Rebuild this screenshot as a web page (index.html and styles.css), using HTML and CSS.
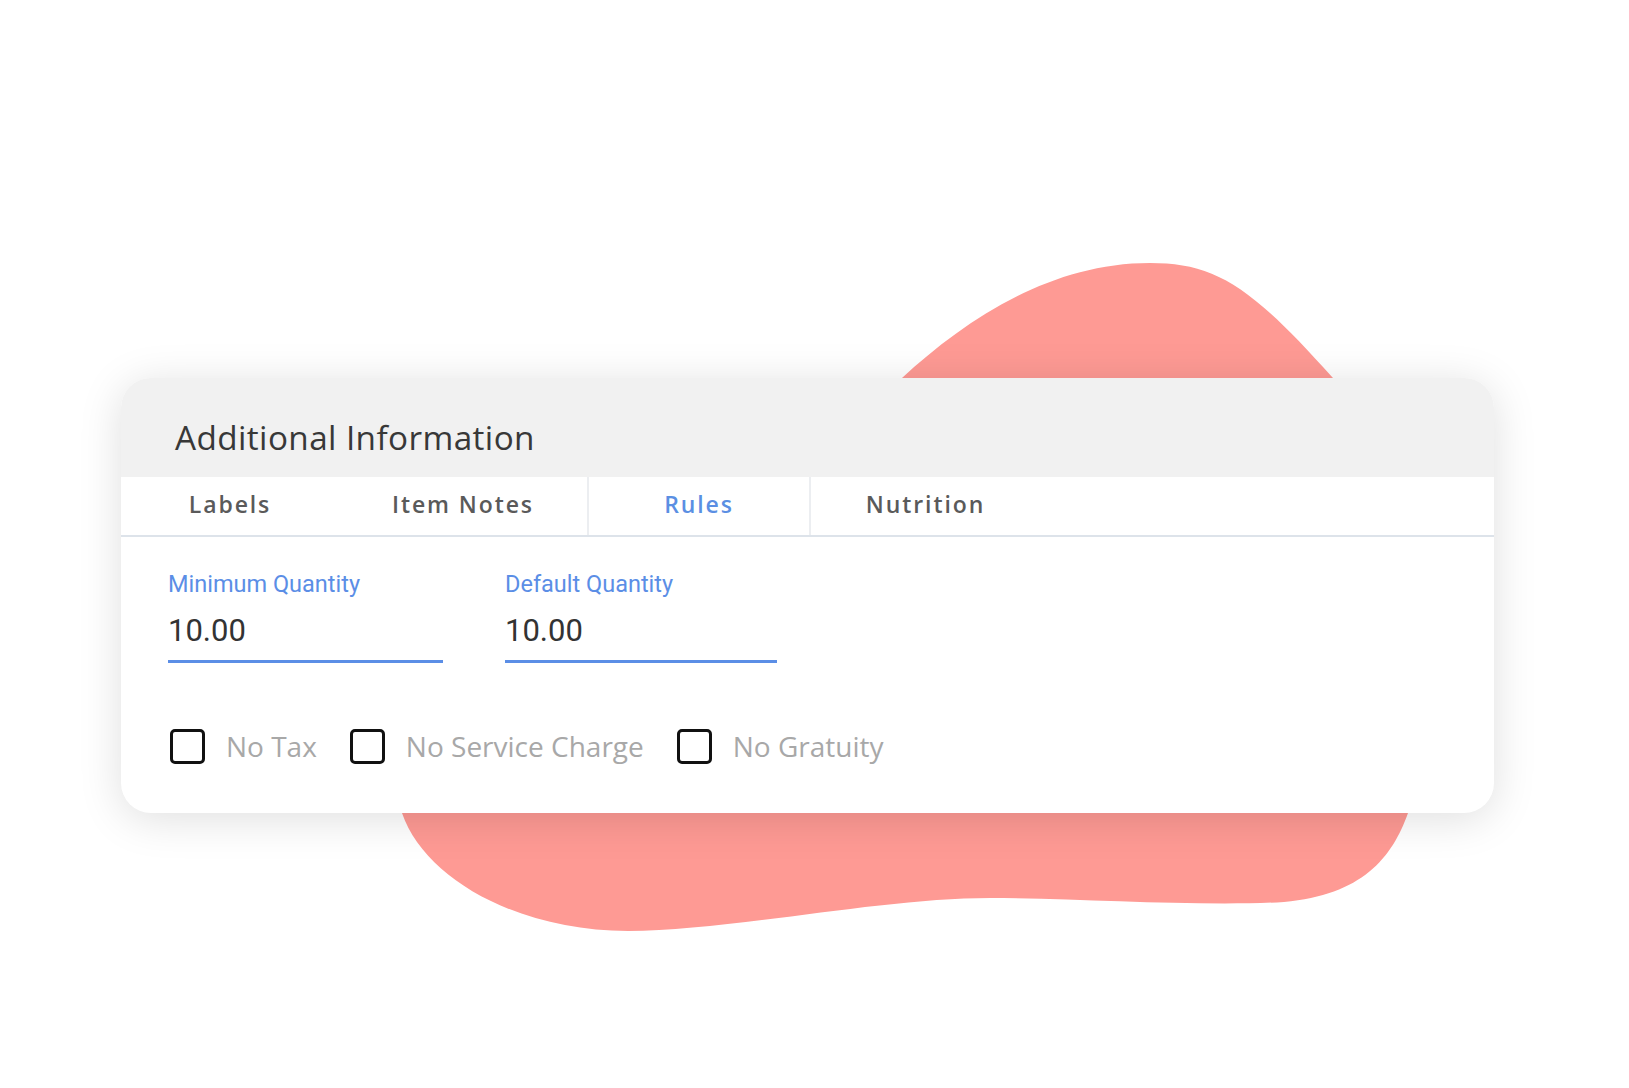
FILE: index.html
```html
<!DOCTYPE html>
<html lang="en">
<head>
<meta charset="utf-8">
<title>Additional Information</title>
<link rel="stylesheet" href="styles.css">
</head>
<body>
<div class="page">
  <svg class="blob" viewBox="0 0 1629 1088" width="1629" height="1088" aria-hidden="true">
    <path d="M 880 420 L 902 378 C 965 320, 1050 263, 1150 263 C 1215 263, 1250 285, 1333 378 L 1440 600 L 1408 813 C 1392 858, 1362 895, 1284 902 C 1200 907, 1080 898, 990 898 C 880 898, 730 931, 628 931 C 520 931, 425 880, 402 813 L 380 600 Z" fill="#fe9a94"/>
  </svg>

  <section class="card">
    <header class="card-header">
      <h2 class="title">Additional Information</h2>
    </header>

    <nav class="tabs">
      <div class="tab">Labels</div>
      <div class="tab">Item Notes</div>
      <div class="tab active">Rules</div>
      <div class="tab">Nutrition</div>
    </nav>

    <div class="content">
      <div class="fields">
        <div class="field field-min">
          <div class="field-label">Minimum Quantity</div>
          <div class="field-value">10.00</div>
        </div>
        <div class="field field-def">
          <div class="field-label">Default Quantity</div>
          <div class="field-value">10.00</div>
        </div>
      </div>

      <div class="checks">
        <label class="check"><span class="box"></span><span class="check-text">No Tax</span></label>
        <label class="check"><span class="box"></span><span class="check-text">No Service Charge</span></label>
        <label class="check"><span class="box"></span><span class="check-text">No Gratuity</span></label>
      </div>
    </div>
  </section>
</div>
</body>
</html>
```

FILE: styles.css
```css
* { box-sizing: border-box; }

html, body {
  margin: 0;
  padding: 0;
  background: #ffffff;
}

.page {
  position: relative;
  width: 1629px;
  height: 1088px;
  padding: 378px 0 0 121px;
  overflow: hidden;
}

.blob {
  position: absolute;
  left: 0;
  top: 0;
  z-index: 0;
}

.card {
  position: relative;
  z-index: 1;
  width: 1373px;
  height: 435px;
  background: #ffffff;
  border-radius: 30px;
  overflow: hidden;
  box-shadow: 0 6px 44px rgba(0, 0, 0, 0.13);
}

.card-header {
  height: 99px;
  background: #f1f1f1;
  padding: 20px 0 0 54px;
  display: flex;
  align-items: center;
}

.title {
  margin: 0;
  font-family: "Open Sans", "Liberation Sans", sans-serif;
  font-weight: 400;
  font-size: 33.3px;
  letter-spacing: 0.4px;
  line-height: 1.2;
  color: #383838;
}

.tabs {
  display: grid;
  grid-template-columns: 218px 248px 224px 229px 1fr;
  height: 60px;
  border-bottom: 2px solid #dde3ea;
}

.tab {
  display: flex;
  align-items: center;
  justify-content: center;
  padding-bottom: 5px;
  font-family: "Open Sans", "Liberation Sans", sans-serif;
  font-weight: 600;
  font-size: 23px;
  letter-spacing: 1.9px;
  color: #5a5a5a;
}

.tab.active {
  color: #5b8fe3;
  border-left: 2px solid #eceef1;
  border-right: 2px solid #eceef1;
}

.content {
  padding: 34px 0 0 47px;
}

.fields {
  display: flex;
  gap: 62px;
}

.field-min { width: 275px; }
.field-def { width: 272px; }

.field-label {
  font-family: Roboto, "Liberation Sans", sans-serif;
  font-size: 23.5px;
  color: #5b8ee6;
  line-height: 27.5px;
}

.field-value {
  margin-top: 14px;
  font-family: Roboto, "Liberation Sans", sans-serif;
  font-size: 31px;
  line-height: 36px;
  color: #333333;
  padding-bottom: 11.5px;
  border-bottom: 3px solid #5b8ee6;
}

.checks {
  display: flex;
  align-items: center;
  gap: 33px;
  margin-top: 66px;
  padding-left: 2px;
}

.check {
  display: flex;
  align-items: center;
  gap: 21px;
}

.box {
  width: 35px;
  height: 35px;
  border: 3.5px solid #111111;
  border-radius: 5px;
  background: #ffffff;
}

.check-text {
  font-family: "Open Sans", "Liberation Sans", sans-serif;
  font-size: 28px;
  color: #a8a8a8;
  line-height: 1.2;
}
```
